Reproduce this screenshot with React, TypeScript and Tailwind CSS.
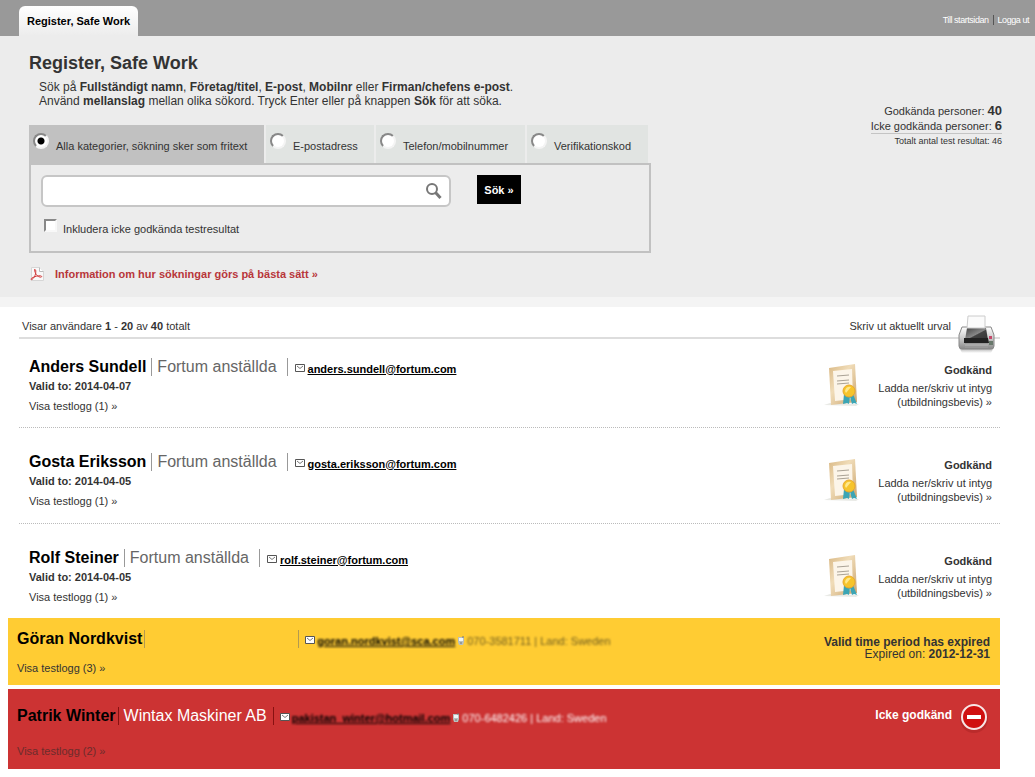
import { useState } from "react";
import type { ReactNode } from "react";

const categories = [
  { id: "all", label: "Alla kategorier, sökning sker som fritext", width: "w-[235px]" },
  { id: "email", label: "E-postadress", width: "w-[108px]" },
  { id: "phone", label: "Telefon/mobilnummer", width: "w-[149px]" },
  { id: "code", label: "Verifikationskod", width: "w-[121px]" },
];

const approved = [
  { name: "Anders Sundell", validTo: "2014-04-07", email: "anders.sundell@fortum.com" },
  { name: "Gosta Eriksson", validTo: "2014-04-05", email: "gosta.eriksson@fortum.com" },
  { name: "Rolf Steiner", validTo: "2014-04-05", email: "rolf.steiner@fortum.com" },
];

function PdfIcon() {
  return (
    <svg width="16" height="14" viewBox="0 0 16 14" fill="none">
      <path d="M2.5.5h8l4 4v9h-12z" fill="#f9f9f9" stroke="#d6d6d6" />
      <path d="M10.5.5v4h4" fill="#fff" stroke="#bbb" />
      <path
        d="M5.500 2.500c1.500-.5 1.500 2 1 4.500-.5 2-2 4.500-3.500 5.500-1.200.6-1.500-.6 0-1.500 2.500-1.500 6-2.500 8.500-2.200 1.700.2 1.500 1.500 0 1.400-2.500-.2-4.500-2.500-5.200-4.500-.5-1.200-.8-2.500-.8-3.200z"
        stroke="#d23c3c"
      />
    </svg>
  );
}

function SearchIcon() {
  return (
    <svg width="18" height="18" viewBox="0 0 18 18" fill="none">
      <circle cx="7" cy="7" r="5" stroke="#777" strokeWidth="2" />
      <path d="M10.500 10.500l5 5.500" stroke="#777" strokeWidth="3" />
    </svg>
  );
}

function MailIcon() {
  return (
    <svg className="mt-0.5 shrink-0" width="10" height="8" viewBox="0 0 10 8">
      <path d="M.5.5h9v7h-9z" fill="#fff" stroke="#555" />
      <path d="M2 2l3 2.500L8 2" fill="none" stroke="#777" />
    </svg>
  );
}

function PhoneIcon() {
  return (
    <svg className="shrink-0" width="8" height="10" viewBox="0 0 8 10">
      <path d="M1 1h6v5l-1 3H2L1 6z" fill="#b9c0bd" />
      <path d="M2 2h4v3H2z" fill="#eef4f6" />
      <path d="M3 7h2M6 0v2" stroke="#777" />
    </svg>
  );
}

function PrinterIcon() {
  return (
    <svg width="40" height="40" viewBox="0 0 40 40">
      <defs>
        <linearGradient id="printer-body" x1="0" y1="0" x2="0" y2="1">
          <stop offset="0" stopColor="#fff" />
          <stop offset="0.5" stopColor="#ccc" />
          <stop offset="1" stopColor="#888" />
        </linearGradient>
        <linearGradient id="printer-lid" x1="0" y1="0" x2="1" y2="1">
          <stop offset="0" stopColor="#444" />
          <stop offset="0.5" stopColor="#888" />
          <stop offset="0.55" stopColor="#444" />
          <stop offset="1" stopColor="#333" />
        </linearGradient>
        <linearGradient id="printer-shadow" x1="0" y1="0" x2="0" y2="1">
          <stop offset="0" stopColor="#999" />
          <stop offset="1" stopColor="#fff" />
        </linearGradient>
      </defs>
      <path d="M3 32h35l-3 6H6z" fill="url(#printer-shadow)" />
      <path d="M6 12h29l3 8v11q0 3-3 3H6q-3 0-3-3V20z" fill="url(#printer-body)" stroke="#888" />
      <path d="M11 13h19l2 12H9z" fill="url(#printer-lid)" />
      <path d="M12 1h17v12H11z" fill="#fbfbfb" stroke="#ccc" />
      <path d="M8 23h24l1 5H8z" fill="#222" />
      <path d="M9 28h23v5H9z" fill="#999" />
      <path d="M9 30h23" stroke="#bbb" />
      <path d="M33 21h3v3h-3z" fill="#c4486a" />
      <path d="M33 26h4v4h-4z" fill="#68786b" />
    </svg>
  );
}

function CertificateIcon() {
  return (
    <svg width="38" height="44" viewBox="0 0 38 44">
      <defs>
        <linearGradient id="cert-frame" x1="0" y1="0" x2="1" y2="1">
          <stop offset="0" stopColor="#d9b884" />
          <stop offset="0.4" stopColor="#f0dcb8" />
          <stop offset="1" stopColor="#c9a26b" />
        </linearGradient>
      </defs>
      <path d="M0 42l6-2 29 1-3 2z" fill="#e9eae6" />
      <path d="M5 5l26-4 2 38-26 3z" fill="url(#cert-frame)" />
      <path d="M9 8l19-2 1 30-18 2z" fill="#fcf5e9" />
      <path d="M13 13l12-1M13 18l12-1M13 21l12-1" stroke="#aaa295" />
      <path d="M20 31l-1 10 4-1 2 1 1-7 2 7 2-1 3 1-4-10z" fill="#3ba5b5" />
      <circle cx="25" cy="28" r="6" fill="#f6c42c" stroke="#eaa92c" />
      <path d="M21 28q1-5 6-4l-5 6z" fill="#ffe88a" />
    </svg>
  );
}

function DeniedIcon() {
  return (
    <svg width="30" height="30" viewBox="0 0 30 30">
      <circle cx="14" cy="16" r="14" fill="#9f2020" opacity=".4" />
      <circle cx="14" cy="14" r="12" fill="#d01010" stroke="#f7e6e6" strokeWidth="2" />
      <path d="M7 14h14" stroke="#fff" strokeWidth="4" />
    </svg>
  );
}

function TopBar() {
  return (
    <header className="flex h-9 items-end justify-between bg-[#999] pl-[19px] pr-1.5">
      <a
        href="#"
        className="flex h-[30px] items-center rounded-t-md bg-linear-to-b from-white to-[#ececec] px-2 font-bold text-black"
      >
        Register, Safe Work
      </a>
      <nav className="flex items-center gap-1 pb-[9px] text-[9px] tracking-tighter text-white">
        <a href="#">Till startsidan</a>
        <span className="h-[10px] w-px bg-[#555]" />
        <a href="#">Logga ut</a>
      </nav>
    </header>
  );
}

function SearchForm() {
  const [category, setCategory] = useState("all");

  return (
    <form className="w-[622px] pt-[17px]" onSubmit={(e) => e.preventDefault()}>
      <div className="flex gap-0.5">
        {categories.map((item) => (
          <label
            key={item.id}
            className={`${item.width} flex h-[38px] gap-[7px] whitespace-nowrap pl-1 ${
              category === item.id ? "bg-[#c1c1c1]" : "bg-[#e1e4e2]"
            }`}
          >
            <input
              type="radio"
              name="category"
              checked={category === item.id}
              onChange={() => setCategory(item.id)}
              className="mt-2 size-4 shrink-0 appearance-none rounded-full border-2 border-t-[#888] border-l-[#888] border-r-[#f4f4f4] border-b-[#f4f4f4] bg-white checked:bg-[radial-gradient(circle,#000_3px,#fff_4px)]"
            />
            <span className="pt-3.5">{item.label}</span>
          </label>
        ))}
      </div>
      <div className="h-[90px] border-2 border-[#c1c1c1] px-2.5 pt-2.5">
        <div className="flex">
          <div className="flex h-8 w-[410px] items-center rounded-md border-2 border-[#c6c6c6] bg-white pr-1.5">
            <input type="text" aria-label="Sök" className="h-full min-w-0 flex-1 px-2 outline-none" />
            <SearchIcon />
          </div>
          <button type="submit" className="ml-[26px] h-[29px] w-11 bg-black font-bold text-white">
            Sök »
          </button>
        </div>
        <label className="flex gap-1.5 pt-3">
          <input
            type="checkbox"
            className="ml-[3px] size-[13px] appearance-none border-2 border-t-[#888] border-l-[#888] border-r-[#f8f8f8] border-b-[#f8f8f8] bg-white checked:bg-black"
          />
          <span className="pt-[3px]">Inkludera icke godkända testresultat</span>
        </label>
      </div>
    </form>
  );
}

function Stats() {
  return (
    <div className="text-right">
      <p className="h-[15px] leading-[15px]">
        Godkända personer: <b className="text-[13px]">40</b>
      </p>
      <p className="h-4 border-b border-[#c4c4c4] leading-[15px]">
        Icke godkända personer: <b className="text-[13px]">6</b>
      </p>
      <p className="text-[9px]">Totalt antal test resultat: 46</p>
    </div>
  );
}

function ApprovedRow({ name, validTo, email }: { name: string; validTo: string; email: string }) {
  return (
    <article className="flex h-24 justify-between border-b border-dotted border-[#bbb] pt-1.5 pr-2 pl-2.5 first:h-[89px] first:pt-0 last:h-[94px] last:border-b-0">
      <div className="pt-[18px]">
        <div className="flex items-center text-base leading-5">
          <h2 className="font-bold text-black">{name}</h2>
          <span className="ml-[5px] h-[18px] w-px bg-[#999]" />
          <span className="ml-[5px] text-[#666]">Fortum anställda</span>
          <span className="ml-2.5 mr-[7px] h-[18px] w-px bg-[#999]" />
          <MailIcon />
          <a href={`mailto:${email}`} className="ml-[3px] pt-[3px] text-[11px] leading-4 font-bold text-black underline">
            {email}
          </a>
        </div>
        <p className="pt-0.5 font-bold">Valid to: {validTo}</p>
        <a href="#" className="mt-1.5 block">
          Visa testlogg (1) »
        </a>
      </div>
      <div className="flex gap-3 pt-6 text-right">
        <CertificateIcon />
        <div className="w-[118px]">
          <p className="font-bold">Godkänd</p>
          <a href="#" className="mt-1 block">
            Ladda ner/skriv ut intyg
            <br />
            (utbildningsbevis) »
          </a>
        </div>
      </div>
    </article>
  );
}

function BlurredContact({ email, phone, color }: { email: string; phone: string; color: string }) {
  return (
    <div className="ml-0.5 flex items-center gap-0.5 pt-1 text-[11px] leading-4">
      <a href="#" className="font-bold text-black underline blur-[1px]">
        {email}
      </a>
      <PhoneIcon />
      <span className={`${color} blur-[1px]`}>{phone} | Land: Sweden</span>
    </div>
  );
}

function Banner({ className, children }: { className: string; children: ReactNode }) {
  return <article className={`ml-2 mr-[35px] flex justify-between pl-[9px] pr-2.5 ${className}`}>{children}</article>;
}

export default function App() {
  return (
    <div className="min-h-screen bg-white font-['Liberation_Sans',Arial,sans-serif] text-[11px] leading-[14px] text-[#333]">
      <TopBar />
      <section className="flex h-[271px] justify-between border-b-10 border-[#f4f4f4] bg-[#ececec] pl-[29px] pr-[33px]">
        <div className="pt-4">
          <h1 className="text-lg leading-[22px] font-bold">Register, Safe Work</h1>
          <p className="pt-1.5 pl-2.5 text-xs leading-[14px]">
            Sök på <b>Fullständigt namn</b>, <b>Företag/titel</b>, <b>E-post</b>, <b>Mobilnr</b> eller{" "}
            <b>Firman/chefens e-post</b>.
            <br />
            Använd <b>mellanslag</b> mellan olika sökord. Tryck Enter eller på knappen <b>Sök</b> för att söka.
          </p>
          <SearchForm />
          <a href="#" className="mt-3.5 flex items-center gap-2.5 font-bold text-[#b8363a]">
            <PdfIcon />
            Information om hur sökningar görs på bästa sätt »
          </a>
        </div>
        <div className="pt-[67px]">
          <Stats />
        </div>
      </section>

      <main>
        <div className="ml-[19px] mr-[35px]">
          <div className="relative flex h-8 items-center justify-between border-b-2 border-[#ddd] pt-[7px] pr-[49px] pl-[3px]">
            <p>
              Visar användare <b>1</b> - <b>20</b> av <b>40</b> totalt
            </p>
            <a href="#">Skriv ut aktuellt urval</a>
            <a href="#" aria-label="Skriv ut" className="absolute top-2 right-1">
              <PrinterIcon />
            </a>
          </div>
          <div>
            {approved.map((person) => (
              <ApprovedRow key={person.name} {...person} />
            ))}
          </div>
        </div>

        <Banner className="h-[67px] bg-[#fc3]">
          <div className="pt-[11px]">
            <div className="flex h-5 items-center">
              <h2 className="text-base leading-5 font-bold text-black">Göran Nordkvist</h2>
              <span className="ml-0.5 h-[18px] w-px bg-[#b39a50]" />
              <span className="ml-[153px] mr-1.5 h-[18px] w-px bg-[#b39a50]" />
              <MailIcon />
              <BlurredContact email="goran.nordkvist@sca.com" phone="070-3581711" color="text-[#6f5d20]" />
            </div>
            <a href="#" className="mt-3 block">
              Visa testlogg (3) »
            </a>
          </div>
          <div className="pt-[18px] text-right text-xs leading-3">
            <p className="font-bold">Valid time period has expired</p>
            <p>
              Expired on: <b>2012-12-31</b>
            </p>
          </div>
        </Banner>

        <Banner className="mt-1 h-20 bg-[#c33]">
          <div className="pt-[17px]">
            <div className="flex h-5 items-center">
              <h2 className="text-base leading-5 font-bold text-black">Patrik Winter</h2>
              <span className="ml-0.5 h-[18px] w-px bg-[#811]" />
              <span className="ml-[5px] text-base leading-5 text-white">Wintax Maskiner AB</span>
              <span className="mx-1.5 h-[18px] w-px bg-[#811]" />
              <MailIcon />
              <BlurredContact email="pakistan_winter@hotmail.com" phone="070-6482426" color="text-white" />
            </div>
            <a href="#" className="mt-[18px] block text-[#6b2c2c]">
              Visa testlogg (2) »
            </a>
          </div>
          <div className="flex gap-2 pt-3.5">
            <p className="pt-1 text-xs leading-4 font-bold text-white">Icke godkänd</p>
            <DeniedIcon />
          </div>
        </Banner>
      </main>
    </div>
  );
}
